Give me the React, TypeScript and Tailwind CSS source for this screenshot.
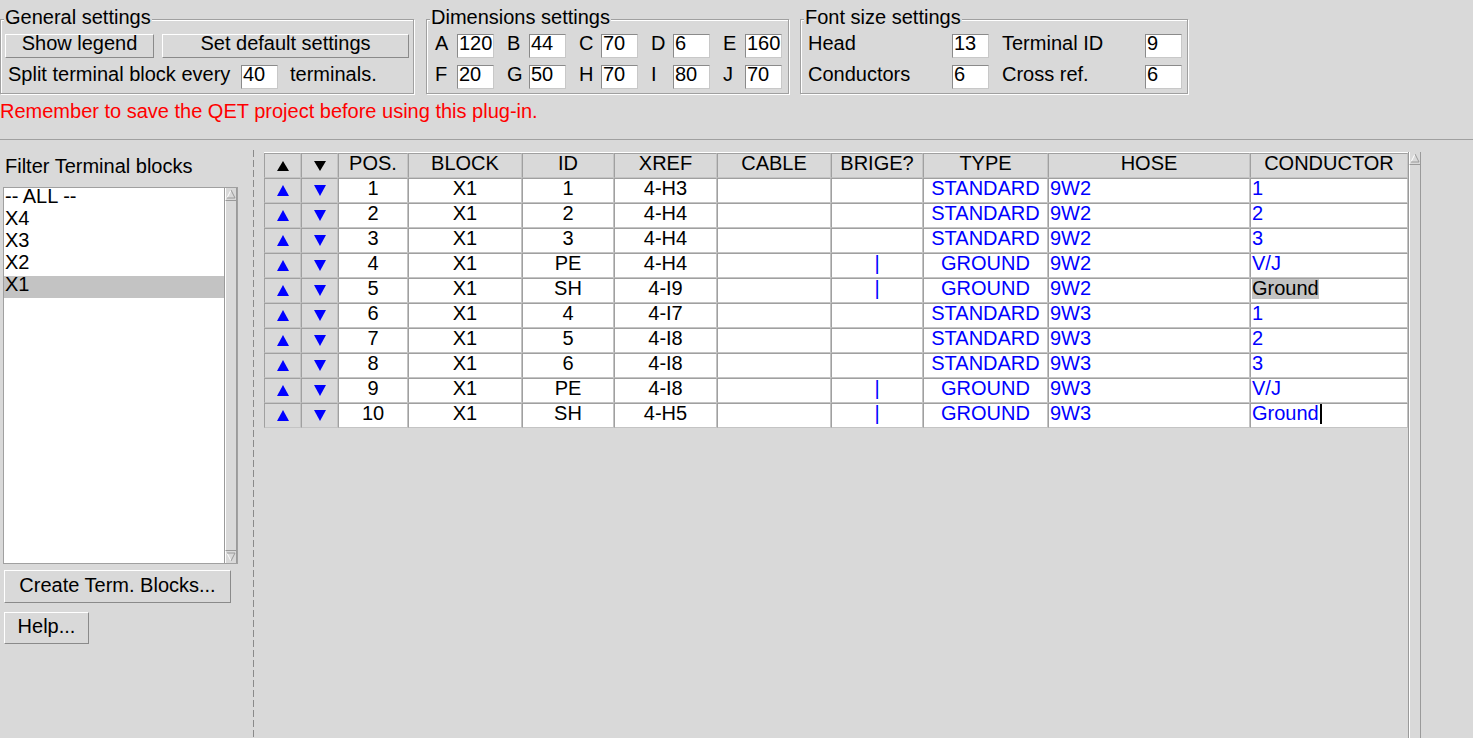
import React from "react";

type KidProps = { className?: string; children?: React.ReactNode };

function Tri({ dir, color, w = 12, h = 11 }: { dir: "up" | "down"; color: string; w?: number; h?: number }) {
  const pts = dir === "up" ? `0,${h} ${w / 2},0 ${w},${h}` : `0,0 ${w},0 ${w / 2},${h}`;
  return (
    <svg width={w} height={h} viewBox={`0 0 ${w} ${h}`}>
      <polygon points={pts} fill={color} />
    </svg>
  );
}

function Btn({ className = "", children }: KidProps) {
  return (
    <button
      type="button"
      className={`flex shrink-0 items-center justify-center border border-t-white border-l-white border-r-[#8a8a8a] border-b-[#8a8a8a] bg-[#d9d9d9] leading-[16px] ${className}`}
    >
      {children}
    </button>
  );
}

function Entry({ value }: { value: string }) {
  return (
    <div className="h-[24px] w-[37px] shrink-0 border border-t-[#8a8a8a] border-l-[#8a8a8a] border-b-[#c8c8c8] border-r-[#c8c8c8] bg-white pl-[1px] leading-[17px]">
      {value}
    </div>
  );
}

function Lbl({ className = "", children }: KidProps) {
  return <div className={`h-[24px] shrink-0 whitespace-nowrap pt-[1px] leading-[17px] ${className}`}>{children}</div>;
}

function Frame({ title, className = "", children }: KidProps & { title: string }) {
  return (
    <div
      className={`h-[75px] shrink-0 border border-[#a0a0a0] shadow-[inset_1px_1px_0_#ffffff,1px_1px_0_#ffffff] ${className}`}
    >
      <div className="-mt-[12px] ml-[3px] h-[18px] w-fit bg-[#d9d9d9] px-[1px] leading-[18px]">{title}</div>
      {children}
    </div>
  );
}

function ScrollBar({ className = "" }: KidProps) {
  return (
    <div className={`flex w-[13px] shrink-0 flex-col border-l border-[#9a9a9a] bg-[#d9d9d9] ${className}`}>
      <div className="flex h-[13px] shrink-0 items-center justify-center border-l border-white border-r border-r-[#9a9a9a] border-b border-b-[#9a9a9a]">
        <svg width="10" height="10" viewBox="0 0 10 10">
          <polyline points="1,9 5,1" fill="none" stroke="#ffffff" strokeWidth="1" />
          <polyline points="5,1 9,9 1,9" fill="none" stroke="#9a9a9a" strokeWidth="1" />
        </svg>
      </div>
      <div className="flex-1 border-l border-white border-r border-r-[#9a9a9a]" />
      <div className="flex h-[13px] shrink-0 items-center justify-center border-l border-white border-r border-r-[#9a9a9a] border-t border-t-[#9a9a9a]">
        <svg width="10" height="10" viewBox="0 0 10 10">
          <polyline points="1,1 5,9" fill="none" stroke="#ffffff" strokeWidth="1" />
          <polyline points="1,1 9,1 5,9" fill="none" stroke="#9a9a9a" strokeWidth="1" />
        </svg>
      </div>
    </div>
  );
}

const W = [
  "w-[37px]",
  "w-[37px]",
  "w-[70px]",
  "w-[114px]",
  "w-[92px]",
  "w-[103px]",
  "w-[114px]",
  "w-[92px]",
  "w-[125px]",
  "w-[202px]",
  "w-[158px]",
];

const CELL =
  "h-[25px] shrink-0 overflow-hidden whitespace-nowrap border border-t-[#a0a0a0] border-l-[#a0a0a0] border-b-[#c4c4c4] border-r-[#c4c4c4] leading-[18px]";

const HEAD = ["POS.", "BLOCK", "ID", "XREF", "CABLE", "BRIGE?", "TYPE", "HOSE", "CONDUCTOR"];

type Row = { pos: string; id: string; xref: string; ground: boolean; hose: string; cond: string };

const ROWS: Row[] = [
  { pos: "1", id: "1", xref: "4-H3", ground: false, hose: "9W2", cond: "1" },
  { pos: "2", id: "2", xref: "4-H4", ground: false, hose: "9W2", cond: "2" },
  { pos: "3", id: "3", xref: "4-H4", ground: false, hose: "9W2", cond: "3" },
  { pos: "4", id: "PE", xref: "4-H4", ground: true, hose: "9W2", cond: "V/J" },
  { pos: "5", id: "SH", xref: "4-I9", ground: true, hose: "9W2", cond: "Ground" },
  { pos: "6", id: "4", xref: "4-I7", ground: false, hose: "9W3", cond: "1" },
  { pos: "7", id: "5", xref: "4-I8", ground: false, hose: "9W3", cond: "2" },
  { pos: "8", id: "6", xref: "4-I8", ground: false, hose: "9W3", cond: "3" },
  { pos: "9", id: "PE", xref: "4-I8", ground: true, hose: "9W3", cond: "V/J" },
  { pos: "10", id: "SH", xref: "4-H5", ground: true, hose: "9W3", cond: "Ground" },
];

function TableRow({ r, i }: { r: Row; i: number }) {
  return (
    <div className="flex">
      <div className={`${CELL} ${W[0]} flex items-center justify-center bg-[#d9d9d9]`}>
        <Tri dir="up" color="#0000ff" />
      </div>
      <div className={`${CELL} ${W[1]} flex items-center justify-center bg-[#d9d9d9]`}>
        <Tri dir="down" color="#0000ff" />
      </div>
      <div className={`${CELL} ${W[2]} bg-white text-center`}>{r.pos}</div>
      <div className={`${CELL} ${W[3]} bg-white text-center`}>X1</div>
      <div className={`${CELL} ${W[4]} bg-white text-center`}>{r.id}</div>
      <div className={`${CELL} ${W[5]} bg-white text-center`}>{r.xref}</div>
      <div className={`${CELL} ${W[6]} bg-white text-center`}></div>
      <div className={`${CELL} ${W[7]} bg-white text-center text-[#0000ff]`}>{r.ground ? "|" : ""}</div>
      <div className={`${CELL} ${W[8]} bg-white text-center text-[#0000ff]`}>{r.ground ? "GROUND" : "STANDARD"}</div>
      <div className={`${CELL} ${W[9]} bg-white pl-px text-[#0000ff]`}>{r.hose}</div>
      <div className={`${CELL} ${W[10]} bg-white pl-px text-[#0000ff]`}>
        {i === 4 ? (
          <span className="bg-[#c3c3c3] text-black">{r.cond}</span>
        ) : i === 9 ? (
          <>
            {r.cond}
            <span className="ml-px inline-block h-[20px] w-[2px] bg-black align-top" />
          </>
        ) : (
          r.cond
        )}
      </div>
    </div>
  );
}

export default function App() {
  return (
    <div className="h-[738px] w-[1473px] overflow-hidden bg-[#d9d9d9] font-['Liberation_Sans',Arial,sans-serif] text-[20px] text-black">
      {/* Settings frames */}
      <div className="flex pt-[19px]">
        <Frame title="General settings" className="w-[414px]">
          <div className="mt-[8px] flex gap-[8px] pl-[4px]">
            <Btn className="h-[24px] w-[149px] pb-[6px]">Show legend</Btn>
            <Btn className="h-[24px] w-[247px] pb-[6px]">Set default settings</Btn>
          </div>
          <div className="mt-[7px] flex pl-[7px]">
            <Lbl className="w-[233px]">Split terminal block every</Lbl>
            <Entry value="40" />
            <Lbl className="ml-[12px]">terminals.</Lbl>
          </div>
        </Frame>

        <Frame title="Dimensions settings" className="ml-[12px] w-[363px]">
          <div className="mt-[8px] flex gap-[13px] pl-[8px]">
            {[
              ["A", "120"],
              ["B", "44"],
              ["C", "70"],
              ["D", "6"],
              ["E", "160"],
            ].map(([l, v]) => (
              <div key={l} className="flex">
                <Lbl className="w-[22px]">{l}</Lbl>
                <Entry value={v} />
              </div>
            ))}
          </div>
          <div className="mt-[7px] flex gap-[13px] pl-[8px]">
            {[
              ["F", "20"],
              ["G", "50"],
              ["H", "70"],
              ["I", "80"],
              ["J", "70"],
            ].map(([l, v]) => (
              <div key={l} className="flex">
                <Lbl className="w-[22px]">{l}</Lbl>
                <Entry value={v} />
              </div>
            ))}
          </div>
        </Frame>

        <Frame title="Font size settings" className="ml-[11px] w-[388px]">
          <div className="mt-[8px] flex pl-[7px]">
            <Lbl className="w-[144px]">Head</Lbl>
            <Entry value="13" />
            <Lbl className="ml-[13px] w-[143px]">Terminal ID</Lbl>
            <Entry value="9" />
          </div>
          <div className="mt-[7px] flex pl-[7px]">
            <Lbl className="w-[144px]">Conductors</Lbl>
            <Entry value="6" />
            <Lbl className="ml-[13px] w-[143px]">Cross ref.</Lbl>
            <Entry value="6" />
          </div>
        </Frame>
      </div>

      {/* Warning */}
      <div className="mt-[8px] h-[18px] whitespace-nowrap leading-[18px] text-[#ff0000]">
        Remember to save the QET project before using this plug-in.
      </div>

      {/* Separator */}
      <div className="mt-[19px] h-px bg-[#a0a0a0]" />

      {/* Lower area */}
      <div className="flex h-[598px]">
        {/* Left panel */}
        <div className="flex w-[253px] shrink-0 flex-col">
          <div className="mt-[17px] ml-[5px] h-[18px] leading-[18px]">Filter Terminal blocks</div>
          <div className="mt-[12px] ml-[3px] flex h-[377px] w-[235px] border border-[#a0a0a0] bg-white">
            <div className="flex-1">
              {["-- ALL --", "X4", "X3", "X2", "X1"].map((t) => (
                <div
                  key={t}
                  className={`h-[22px] pl-px leading-[16px] ${t === "X1" ? "bg-[#c3c3c3]" : ""}`}
                >
                  {t}
                </div>
              ))}
            </div>
            <ScrollBar />
          </div>
          <Btn className="mt-[6px] ml-[4px] h-[33px] w-[227px] pb-[4px]">Create Term. Blocks...</Btn>
          <Btn className="mt-[9px] ml-[4px] h-[32px] w-[85px] pb-[5px]">Help...</Btn>
        </div>

        {/* Dashed divider */}
        <div className="mt-[10px] w-px shrink-0 bg-[linear-gradient(to_bottom,#8a8a8a_70%,transparent_70%)] bg-[length:1px_10px]" />

        {/* Table */}
        <div className="mt-[12px] ml-[10px] flex items-start">
          <div className="border-t border-white">
            <div className="flex">
              <div className={`${CELL} ${W[0]} flex items-center justify-center bg-[#d9d9d9]`}>
                <Tri dir="up" color="#000000" w={12} h={10} />
              </div>
              <div className={`${CELL} ${W[1]} flex items-center justify-center bg-[#d9d9d9]`}>
                <Tri dir="down" color="#000000" w={12} h={10} />
              </div>
              {HEAD.map((h, k) => (
                <div key={h} className={`${CELL} ${W[k + 2]} bg-[#d9d9d9] text-center`}>
                  {h}
                </div>
              ))}
            </div>
            {ROWS.map((r, i) => (
              <TableRow key={i} r={r} i={i} />
            ))}
          </div>
          <ScrollBar className="h-[640px]" />
        </div>
      </div>
    </div>
  );
}
